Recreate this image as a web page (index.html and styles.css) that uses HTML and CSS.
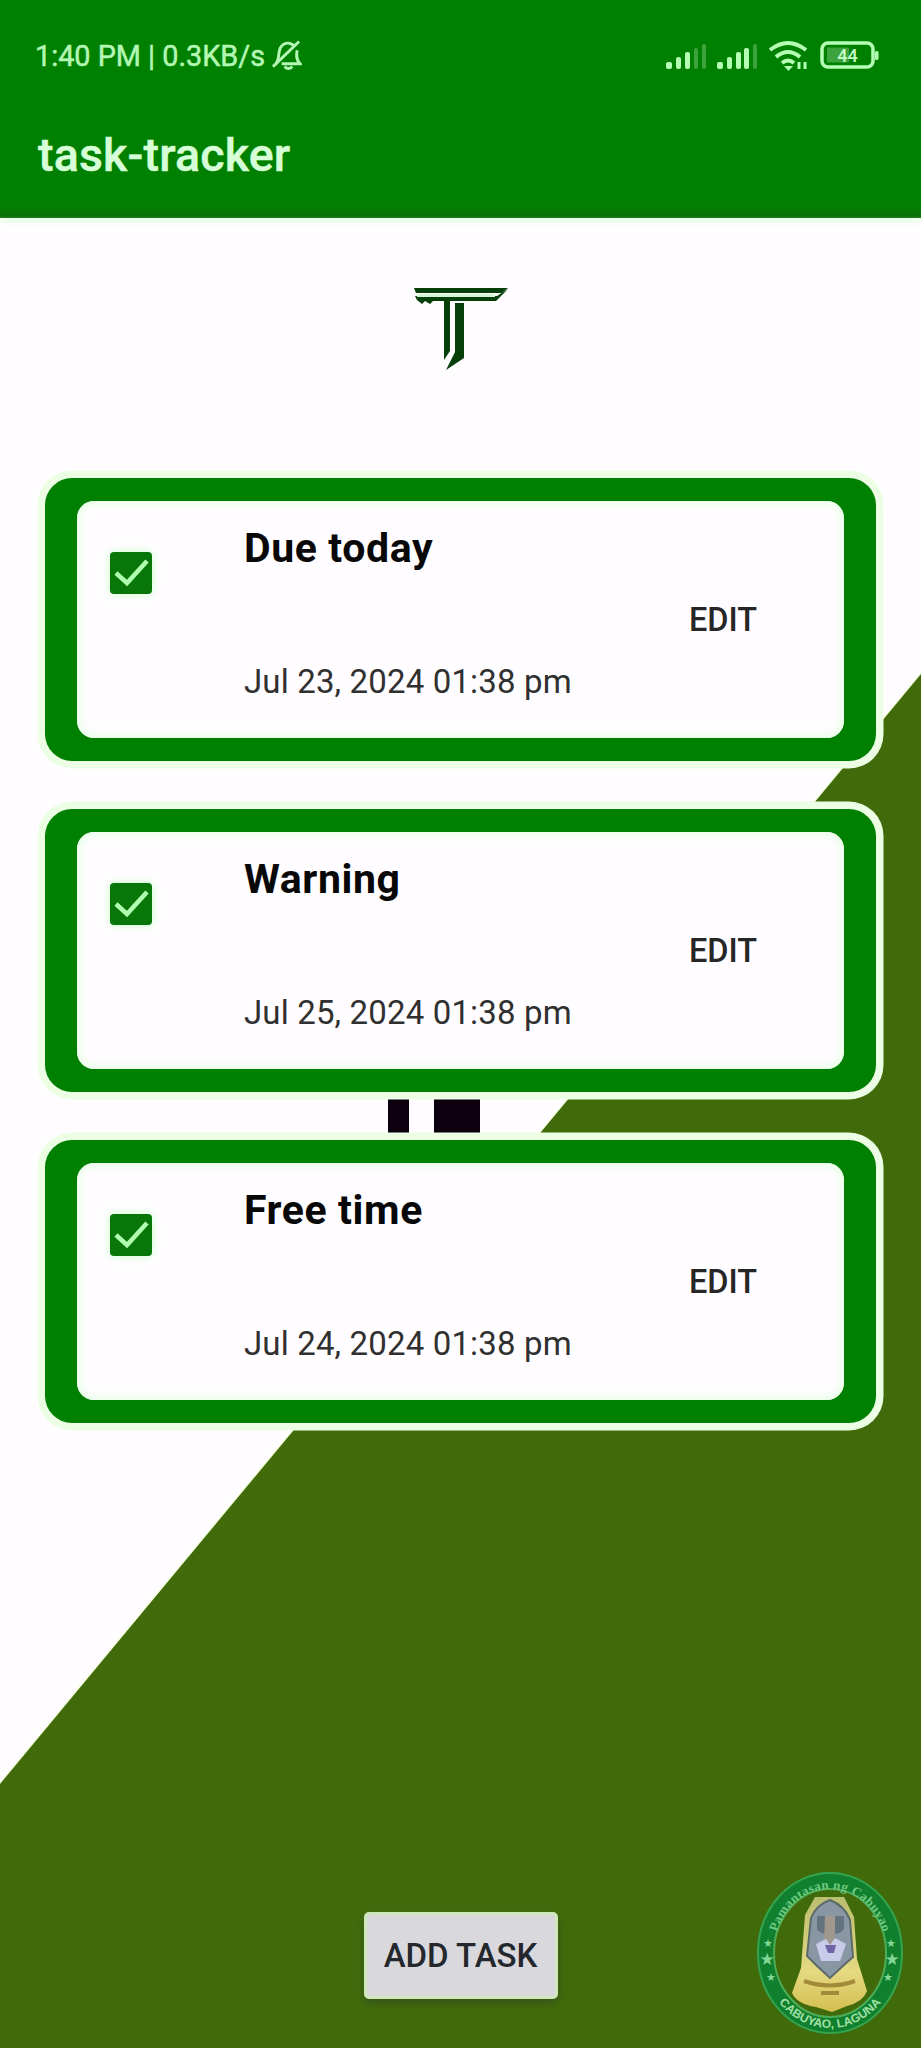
FILE: index.html
```html
<!DOCTYPE html>
<html lang="en">
<head>
<meta charset="utf-8">
<title>task-tracker</title>
<link rel="stylesheet" href="styles.css">
</head>
<body>
<div class="screen">
  <svg class="backdrop" viewBox="0 0 921 2048" aria-hidden="true">
    <path d="M921 674V2048H0V1784Z" fill="#416b0b" stroke="#f6ffe0" stroke-width="3"/>
    <path d="M921 674V2048H0V1784Z" fill="#416b0b"/>
    <path d="M388 1090h21v50h-21zM434 1090h46v50h-46z" fill="#0c0010"/>
  </svg>

  <header class="top">
    <div class="status">
      <span class="status-text">1:40 PM | 0.3KB/s</span>
      <svg class="bell" viewBox="0 0 32 34" fill="none" stroke="#b4f7b4" stroke-width="3">
        <path d="M5 26C9 22 7 14 10 9C13 4 20 3 24 8M27 12C26 18 26 22 30 26H11M14 29q4 4 8 0"/>
        <path d="M2 29L29 3"/>
      </svg>
      <span class="spacer"></span>
      <svg class="signals" viewBox="0 0 216 34">
        <g fill="#b4ffb4">
          <rect x="1" y="23" width="6" height="7" rx="2"/><rect x="11" y="18" width="5" height="12" rx="2"/><rect x="20" y="13" width="5" height="17" rx="2"/>
          <rect x="52" y="23" width="6" height="7" rx="2"/><rect x="62" y="18" width="5" height="12" rx="2"/><rect x="71" y="13" width="5" height="17" rx="2"/><rect x="79" y="9" width="5" height="21" rx="2"/>
        </g>
        <g fill="#3da33d">
          <rect x="29" y="9" width="4" height="21" rx="2"/><rect x="37" y="5" width="4" height="25" rx="2"/><rect x="88" y="5" width="4" height="25" rx="2"/>
        </g>
        <g fill="none" stroke="#b4ffb4" stroke-width="4">
          <path d="M105 11Q123-3 141 11"/><path d="M111 18Q123 8 135 18"/><path d="M117 24Q123 19 129 24"/>
          <path d="M134 23v7M140 23v7" stroke-width="3"/>
          <rect x="157" y="4" width="51" height="24" rx="6" stroke-width="3.5"/>
        </g>
        <path d="M119 27h9l-4.500 5z" fill="#b4ffb4"/>
        <rect x="162" y="8.500" width="22" height="15" fill="#3da33d"/>
        <rect x="210" y="12" width="3.500" height="9" rx="1.500" fill="#b4ffb4"/>
        <text class="battery" x="182.500" y="23" text-anchor="middle">44</text>
      </svg>
    </div>
    <h1 class="title">task-tracker</h1>
  </header>

  <div class="brand">
    <svg class="logo" viewBox="0 0 94 84" fill="#073f0b">
      <path d="M0 1H94L88 6H2Z"/>
      <path d="M1 9H83L94 2L82 14H19L16 17L11 14L8 17L3 13Z"/>
      <path d="M3 8.500h78" stroke="#d6f5d6" stroke-width="3"/>
      <path d="M30 12H36V64L30 73Z"/>
      <path d="M41 16H50V71L32 83L41 65Z"/>
    </svg>
  </div>

  <main class="tasks">
    <article class="card"><div class="panel">
      <span class="check"><svg viewBox="0 0 42 42"><path d="M6 21L17 31L37 9"/></svg></span>
      <div class="info"><h2 class="name">Due today</h2><p class="date">Jul 23, 2024 01:38 pm</p></div>
      <button class="edit">EDIT</button>
    </div></article>
    <article class="card"><div class="panel">
      <span class="check"><svg viewBox="0 0 42 42"><path d="M6 21L17 31L37 9"/></svg></span>
      <div class="info"><h2 class="name">Warning</h2><p class="date">Jul 25, 2024 01:38 pm</p></div>
      <button class="edit">EDIT</button>
    </div></article>
    <article class="card"><div class="panel">
      <span class="check"><svg viewBox="0 0 42 42"><path d="M6 21L17 31L37 9"/></svg></span>
      <div class="info"><h2 class="name">Free time</h2><p class="date">Jul 24, 2024 01:38 pm</p></div>
      <button class="edit">EDIT</button>
    </div></article>
  </main>

  <footer class="actions">
    <button class="add">ADD TASK</button>
  </footer>

  <svg class="seal" viewBox="0 0 150 168">
    <defs>
      <path id="arc-top" d="M19 84A56 64 0 0 1 131 84"/>
      <path id="arc-bottom" d="M7 84A68 75 0 0 0 143 84"/>
      <linearGradient id="gold" x1="0" y1="0" x2="0" y2="1"><stop offset="0" stop-color="#b9be70"/><stop offset=".65" stop-color="#e5d982"/><stop offset="1" stop-color="#d3bf4f"/></linearGradient>
    </defs>
    <ellipse cx="75" cy="84" rx="64.500" ry="72.500" fill="none" stroke="#10802f" stroke-width="17"/>
    <ellipse cx="75" cy="84" rx="72" ry="80" fill="none" stroke="#38a34d" stroke-width="2"/>
    <ellipse cx="75" cy="84" rx="56" ry="64" fill="none" stroke="#4dac55" stroke-width="2"/>
    <text class="seal-text"><textPath href="#arc-top" startOffset="50%" text-anchor="middle" textLength="146">Pamantasan ng Cabuyao</textPath></text>
    <text class="seal-text seal-low"><textPath href="#arc-bottom" startOffset="50%" text-anchor="middle" textLength="118">CABUYAO, LAGUNA</textPath></text>
    <g class="seal-stars"><text x="13" y="78">★</text><text x="12" y="96" class="big">★</text><text x="16" y="112">★</text><text x="136" y="78">★</text><text x="137" y="96" class="big">★</text><text x="133" y="112">★</text></g>
    <path d="M60 28H89L99 48L102 90L112 122Q108 133 92 137L77 143L61 138Q42 135 37 124L46 99L50 46Z" fill="url(#gold)"/>
    <path d="M75 31Q90 37 95 51L98 88L90 95L75 109L61 96L52 87L56 49Q61 36 75 31Z" fill="#8996a3" stroke="#5c6a6a" stroke-width="2"/>
    <path d="M62 47h11v18q-8 0-11-5zM77 47h12v13q-3 5-12 5z" fill="#64747f"/>
    <path d="M70 47h10v24l-5 6l-6-6z" fill="#a0978f"/>
    <path d="M61 75L71 70L75 76L80 69L91 75L85 92H66Z" fill="#c9cce8"/>
    <path d="M70 76h11l-2 8h-6z" fill="#6f65a6"/>
    <path d="M49 112Q75 121 100 112M66 124h18" fill="none" stroke="#a38a3a" stroke-width="4"/>
  </svg>
</div>
</body>
</html>
```
FILE: styles.css
```css
* { box-sizing: border-box; }
body { margin: 0; }
.screen {
  position: relative;
  width: 921px;
  height: 2048px;
  overflow: hidden;
  display: flex;
  flex-direction: column;
  background: #fffdff;
  font-family: Roboto, "Liberation Sans", sans-serif;
}
.backdrop { position: absolute; inset: 0; width: 921px; height: 2048px; }
.top {
  position: relative;
  height: 218px;
  flex: none;
  background: linear-gradient(#008000 0 205px, #087208 216px, #2a792a 218px);
  box-shadow: 0 2px 8px #d5ffd5;
}
.status { display: flex; align-items: flex-start; height: 112px; padding: 36px 40px 0 35px; }
.status-text { font-size: 28.8px; line-height: 40px; color: #b4f7b4; white-space: pre; -webkit-text-stroke: .5px #b4f7b4; }
.bell { width: 31px; height: 34px; margin-left: 6px; margin-top: 2px; }
.spacer { flex: 1; }
.signals { width: 216px; height: 34px; margin-top: 3px; }
.battery { font: 500 18px Roboto, sans-serif; fill: #c8ffc8; }
.title { margin: 0; padding-left: 38px; font-size: 46.500px; line-height: 87px; font-weight: 500; letter-spacing: .2px; color: #d7ffd7; -webkit-text-stroke: .5px #d7ffd7; }
.brand { position: relative; height: 260px; flex: none; display: flex; justify-content: center; padding-top: 69px; }
.logo { width: 94px; height: 84px; }
.tasks { position: relative; display: flex; flex-direction: column; gap: 48px; padding: 0 45px; }
.card {
  height: 283px;
  padding: 23px 32px;
  border-radius: 27px;
  background: #008000;
  box-shadow: 0 0 0 7.5px #ecffe4;
}
.panel {
  display: flex;
  height: 237px;
  border-radius: 17px;
  background: #fffdff;
  box-shadow: inset 0 0 9px 3px #e6ffe6;
}
.check { width: 42px; height: 42px; margin: 51px 0 0 33px; border-radius: 4px; background: #087608; box-shadow: 0 0 8px #c4ffc4; flex: none; }
.check svg { display: block; width: 42px; height: 42px; fill: none; stroke: #b0ffb0; stroke-width: 4.5; }
.info { width: 440px; padding: 20px 0 0 92px; flex: none; }
.name { margin: 0; font-size: 41px; line-height: 54px; font-weight: 700; letter-spacing: .6px; color: #080808; white-space: nowrap; }
.date { margin: 82px 0 0; font-size: 33px; line-height: 50px; letter-spacing: .15px; color: #303030; white-space: nowrap; }
.edit { margin: 94px 0 0 97px; width: 70px; height: 50px; padding: 0; border: 0; background: none; text-align: left; font: 500 32.500px/50px Roboto, sans-serif; color: #262626; }
.actions { position: relative; display: flex; justify-content: center; padding-top: 489px; }
.add { width: 194px; height: 87px; padding: 0; border: 3px solid #d0e7bd; border-radius: 5px; background: #d9d9dd; font: 500 33px/81px Roboto, sans-serif; color: #24282d; box-shadow: 0 4px 9px #36541d; }
.seal { position: absolute; left: 755px; top: 1869px; width: 150px; height: 168px; }
.seal-text { font: 700 13px "Liberation Serif", serif; fill: #70c981; }
.seal-low { font: 700 12px "Liberation Sans", sans-serif; fill: #a1e0a5; }
.seal-stars { font: 11px "DejaVu Sans", sans-serif; fill: #83d695; text-anchor: middle; }
.seal-stars .big { font-size: 17px; }
```
